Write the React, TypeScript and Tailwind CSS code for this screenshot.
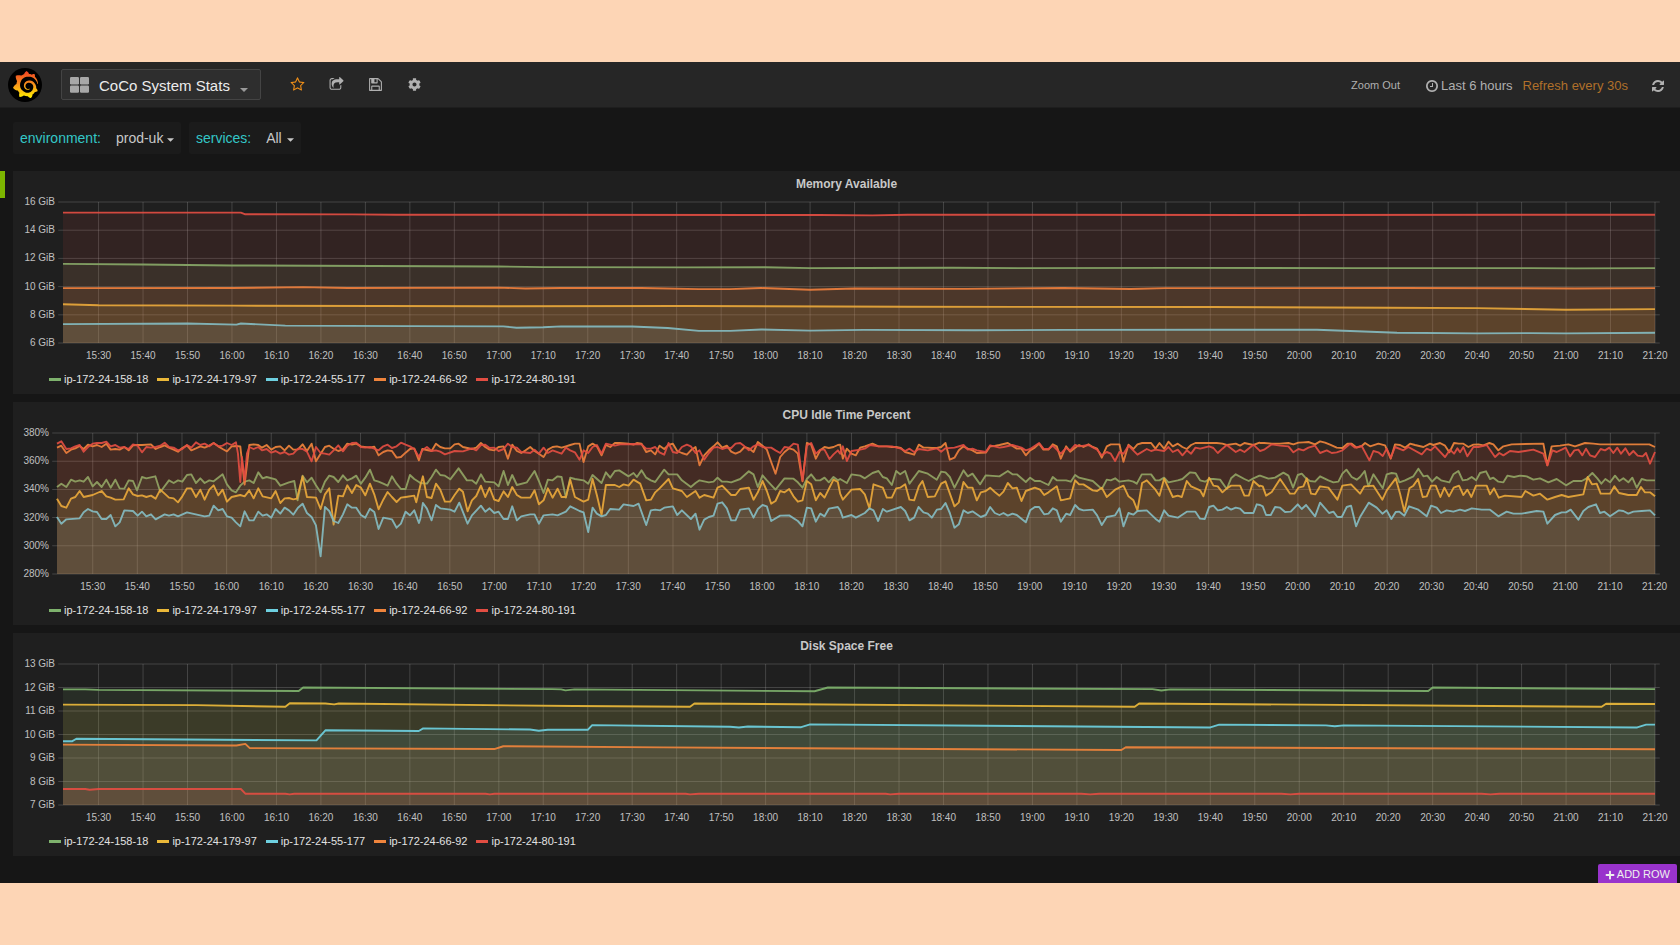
import { Fragment, useId } from "react";
import { FaCog, FaPlus } from "react-icons/fa";
import { SiGrafana } from "react-icons/si";

type Point = [number, number];

type PanelProps = {
  title: string;
  yLabels: string[];
  wideAxis?: boolean;
  /** Points normalised to a 1000 x 1000 plot, one list per host. */
  series: Point[][];
};

const HOSTS = [
  { name: "ip-172-24-158-18", color: "#7eb26d", swatch: "bg-[#7eb26d]" },
  { name: "ip-172-24-179-97", color: "#eab839", swatch: "bg-[#eab839]" },
  { name: "ip-172-24-55-177", color: "#6ed0e0", swatch: "bg-[#6ed0e0]" },
  { name: "ip-172-24-66-92", color: "#ef843c", swatch: "bg-[#ef843c]" },
  { name: "ip-172-24-80-191", color: "#e24d42", swatch: "bg-[#e24d42]" },
];

const MINUTES = 358;
const FIRST_TICK = 8;
const TICKS = Array.from({ length: 36 }, (_, i) => {
  const minutes = 15 * 60 + 30 + i * 10;
  return `${Math.floor(minutes / 60)}:${String(minutes % 60).padStart(2, "0")}`;
});

const parse = (text: string): Point[] =>
  text
    .trim()
    .split(/\s+/)
    .map((pair) => pair.split(",").map(Number) as Point);

/** Series given as "minute,value" pairs. */
const byMinute = (min: number, max: number, text: string): Point[] =>
  parse(text).map(([x, y]) => [(x / MINUTES) * 1000, ((max - y) / (max - min)) * 1000]);

/** CPU samples, in four stretches of 1260 units each. */
const CPU_LEFT = 170;
const CPU_WIDTH = 4795;
const CPU_TOP = 98;
const CPU_HEIGHT = 423;
const cpu = (...parts: string[]): Point[] =>
  parts.flatMap((part, i) =>
    parse(part).map(
      ([x, y]): Point => [
        ((x + i * 1260 - CPU_LEFT) / CPU_WIDTH) * 1000,
        ((y - CPU_TOP) / CPU_HEIGHT) * 1000,
      ],
    ),
  );

const MEMORY = [
  "0,11.61 18,11.57 38,11.5 70,11.46 98,11.43 108,11.38 140,11.36 158,11.37 168,11.31 180,11.32 200,11.34 215,11.31 250,11.33 290,11.31 330,11.31 340,11.29 358,11.31",
  "0,8.75 8,8.68 38,8.65 98,8.61 140,8.62 190,8.57 258,8.55 298,8.5 318,8.47 338,8.36 358,8.4",
  "0,7.34 28,7.38 39,7.3 40,7.38 50,7.23 78,7.2 99,7.18 102,7.08 108,7.12 112,7.18 128,7.17 136,7.06 143,6.86 150,6.86 157,6.96 168,6.88 180,6.93 205,6.9 225,6.93 258,6.94 282,6.94 288,6.87 300,6.73 318,6.68 330,6.7 338,6.68 358,6.73",
  "0,9.89 38,9.9 54,9.96 64,9.9 98,9.93 104,9.87 112,9.9 130,9.9 143,9.82 150,9.82 157,9.9 168,9.78 178,9.87 203,9.84 225,9.9 240,9.83 248,9.89 300,9.9 340,9.87 358,9.89",
  "0,15.25 40,15.25 41,15.13 65,15.12 75,15.1 170,15.08 182,15.05 190,15.1 270,15.08 358,15.1",
].map((s) => byMinute(6, 16, s));

const DISK = [
  "0,11.92 5,11.92 8,11.9 53,11.85 54,12 110,11.93 112,11.92 113,11.88 115,11.92 169,11.84 172,12 245,11.93 247,11.87 249,11.92 307,11.85 308,12 358,11.93",
  "0,11.27 30,11.25 50,11.18 51,11.33 59,11.32 61,11.28 62,11.32 115,11.21 141,11.18 142,11.32 241,11.18 242,11.32 346,11.18 347,11.31 358,11.3",
  "0,9.71 2,9.71 3,9.82 57,9.75 59,10.18 80,10.15 81,10.26 105,10.21 107,10.16 109,10.2 118,10.2 119,10.4 150,10.33 152,10.3 154,10.34 166,10.31 168,10.43 258,10.3 260,10.42 284,10.39 286,10.35 288,10.39 354,10.3 356,10.42 358,10.42",
  "0,9.57 39,9.53 41,9.6 42,9.42 97,9.38 99,9.5 135,9.45 238,9.34 239,9.46 358,9.37",
  "0,7.68 5,7.68 6,7.65 8,7.68 40,7.68 41,7.48 50,7.48 51,7.45 52,7.48 95,7.48 96,7.45 97,7.48 140,7.48 141,7.45 143,7.48 185,7.48 186,7.45 188,7.48 229,7.48 231,7.45 233,7.48 274,7.48 276,7.45 278,7.48 319,7.48 321,7.45 323,7.48 358,7.48",
].map((s) => byMinute(7, 13, s));

const CPU = [
  cpu(
    "170,260 183,250 198,260 212,238 225,244 238,240 250,244 263,230 277,258 290,245 304,260 318,238 331,262 345,238 358,264 372,265 385,240 398,242 410,270 425,230 438,234 465,228 480,275 506,240 520,248 533,240 546,244 560,224 573,222 587,248 600,234 613,248 627,240 640,243 667,222 680,252 694,270 707,276 720,256 733,244 747,240 760,248 774,216 787,234 799,230 826,237 840,256 866,246 882,242 892,300 907,226 920,246 934,232 947,255 961,276 974,244 987,226 1000,230 1014,245 1028,225 1041,240 1055,234 1068,226 1082,250 1095,232 1109,208 1122,240 1135,244 1149,250 1162,256 1175,228 1189,250 1202,266 1216,266 1229,224 1242,236 1256,245",
    "0,248 20,250 34,230 47,208 60,224 74,226 90,237 115,204 140,240 155,240 168,250 182,222 195,244 222,246 235,258 250,212 263,254 276,224 290,254 320,246 343,212 356,242 370,278 383,238 397,240 412,228 424,230 437,292 450,232 464,236 490,240 504,250 517,224 544,248 557,216 570,232 584,212 597,210 625,228 640,218 650,230 664,210 678,232 692,240 705,245 732,208 745,222 771,222 785,240 812,260 826,248 838,240 866,246 880,244 892,232 906,244 920,244 933,246 960,236 986,213 1000,222 1013,260 1027,225 1040,240 1066,268 1093,234 1120,235 1133,246 1147,262 1160,236 1173,222 1187,240 1200,240 1213,232 1226,246 1240,230 1253,240",
    "0,236 20,248 34,222 60,226 74,234 97,218 115,212 128,230 140,234 155,254 168,212 180,222 195,212 208,250 236,212 263,220 290,238 303,214 316,216 329,230 343,262 370,210 383,228 397,220 420,252 437,225 478,228 503,212 517,222 530,222 557,245 570,232 584,242 600,242 625,254 638,230 650,240 678,240 692,244 705,224 717,232 758,242 785,266 800,238 812,240 825,234 838,244 865,240 880,244 890,250 905,222 933,222 946,240 958,240 972,232 985,246 1013,240 1027,236 1050,216 1066,218 1080,240 1095,244 1107,236 1120,236 1140,238 1160,266 1173,234 1187,222 1213,236 1226,242 1240,234 1258,226",
    "0,226 25,235 45,232 70,217 85,226 99,262 113,224 125,220 138,234 150,242 165,244 180,228 205,240 220,246 235,244 247,220 259,208 275,230 290,238 300,230 314,212 325,258 340,222 368,264 380,222 395,218 408,220 418,246 435,240 460,228 475,205 490,228 502,226 516,244 530,230 543,240 568,246 580,222 595,212 608,240 622,238 635,230 648,240 660,218 678,213 690,236 700,232 715,244 730,246 742,226 762,230 780,226 800,228 820,238 840,234 865,246 890,236 918,255 940,242 965,242 980,234 997,218 1012,234 1024,250 1036,236 1050,246 1065,226 1078,242 1090,234 1105,246 1117,232 1130,262 1145,236 1160,240 1185,240",
  ),
  cpu(
    "170,295 183,317 198,322 212,295 225,290 238,272 250,290 277,284 304,272 318,288 331,292 345,298 370,297 385,264 398,282 412,287 425,285 438,290 452,286 466,295 480,268 493,280 506,292 520,294 533,306 546,288 560,264 573,264 587,290 600,268 613,298 627,268 640,255 654,285 667,268 680,304 694,290 720,284 733,288 747,270 760,294 774,264 787,288 813,294 826,272 840,308 853,294 866,293 879,297 890,295 907,228 920,290 947,292 961,326 974,282 987,264 1000,373 1014,286 1028,288 1041,255 1055,278 1068,254 1082,262 1095,285 1109,250 1122,282 1135,327 1149,298 1162,275 1175,290 1189,305 1202,292 1216,290 1242,286 1248,306",
    "0,256 8,228 20,290 34,293 47,250 60,268 74,304 90,304 103,284 117,265 128,274 142,333 155,300 168,287 182,256 195,290 208,262 222,298 235,302 250,273 263,290 276,260 290,284 303,292 330,292 343,270 356,312 370,300 383,264 397,292 412,265 424,290 437,290 450,238 464,290 490,304 504,298 517,236 530,285 544,344 557,254 584,254 597,260 610,252 625,256 640,238 660,250 678,300 692,298 705,276 718,264 745,236 758,264 785,272 800,290 826,272 838,292 852,284 880,292 892,262 906,256 933,284 946,284 960,266 986,262 1000,298 1013,276 1027,242 1040,272 1053,310 1066,302 1080,272 1093,276 1107,266 1120,288 1133,304 1147,300 1160,242 1173,252 1187,300 1200,278 1213,292 1240,238 1253,245",
    "0,280 8,298 34,268 60,266 74,282 88,324 100,252 128,262 140,292 155,292 168,264 180,262 195,252 208,298 222,300 236,258 247,242 263,290 284,288 303,250 316,243 343,318 356,306 370,245 383,262 397,262 410,300 422,276 437,272 450,262 464,275 478,286 490,274 503,248 517,264 530,262 544,302 557,272 584,262 600,268 612,284 625,276 650,258 662,300 690,294 705,240 717,252 730,252 758,270 771,272 785,262 800,290 825,268 850,256 865,288 880,300 892,330 906,248 920,240 946,268 958,286 972,235 998,290 1013,286 1025,290 1040,242 1053,258 1080,270 1090,288 1107,232 1120,256 1133,258 1147,276 1160,264 1173,256 1200,256 1213,286 1226,286 1240,242 1258,258",
    "0,256 8,258 18,286 35,275 60,236 75,258 90,280 103,280 115,262 130,258 140,234 153,280 166,282 180,258 205,262 232,298 247,256 273,252 300,280 313,258 340,256 367,298 380,270 407,234 420,280 433,334 448,264 460,256 474,236 488,290 500,288 513,256 527,256 541,290 553,262 567,288 581,262 597,256 610,284 622,268 634,290 648,256 680,256 690,282 702,264 716,292 735,286 785,290 796,272 820,286 840,280 862,298 885,290 905,284 925,290 970,282 983,230 996,252 1010,250 1022,280 1050,280 1063,258 1077,278 1105,284 1130,284 1143,260 1155,276 1170,276 1185,288",
  ),
  cpu(
    "170,350 183,370 198,357 238,354 250,336 263,326 277,333 290,335 304,356 318,356 331,344 345,378 358,366 372,330 398,332 412,346 425,334 438,348 452,342 466,357 493,342 506,346 520,342 533,348 560,336 613,348 627,346 640,316 654,330 667,326 680,348 694,352 707,366 720,378 733,333 747,360 760,360 774,334 787,346 799,342 813,352 826,326 840,340 853,322 866,330 879,343 893,322 907,310 920,338 934,350 947,375 961,468 974,320 987,332 1000,362 1014,368 1028,342 1041,312 1055,322 1068,322 1082,344 1095,352 1109,325 1122,335 1135,386 1149,352 1175,357 1189,382 1202,370 1216,334 1229,345 1242,330 1256,368",
    "0,356 8,308 20,325 34,360 47,314 60,324 90,328 103,334 117,307 142,370 155,345 182,316 195,334 208,324 222,338 235,334 250,356 263,356 276,318 290,360 303,348 330,342 343,342 356,370 370,345 397,342 412,345 437,334 450,318 478,332 490,336 504,395 517,322 530,340 544,348 557,344 570,326 597,328 610,312 640,317 655,310 678,374 692,330 705,328 720,330 732,322 758,318 771,344 785,330 812,356 826,340 838,388 852,358 866,350 880,346 892,310 906,306 920,324 933,360 946,360 960,328 986,324 1000,352 1013,326 1027,314 1040,318 1053,362 1080,346 1107,345 1133,362 1147,378 1160,322 1173,324 1187,364 1200,340 1213,348 1226,325 1253,320",
    "0,330 8,352 34,344 47,352 74,338 88,324 100,330 114,362 128,326 140,334 182,320 195,332 208,360 222,352 235,320 250,336 263,340 275,352 290,328 303,326 316,308 329,338 343,382 356,372 370,330 383,338 397,333 422,350 437,344 450,320 464,338 478,344 490,338 503,346 517,340 530,344 557,366 570,330 584,320 597,320 612,342 625,340 638,324 650,330 662,364 678,340 690,344 705,314 717,326 730,330 758,328 771,345 785,374 800,350 825,345 838,324 850,378 865,338 880,343 892,332 920,330 946,355 958,364 972,330 985,346 1013,352 1040,334 1066,334 1080,355 1094,356 1107,320 1120,316 1133,330 1147,328 1160,320 1173,328 1187,322 1200,325 1213,338 1240,338 1250,312",
    "0,314 8,318 18,344 32,344 45,320 60,322 75,335 92,334 113,312 125,326 138,314 165,348 180,307 207,338 220,334 232,350 245,350 260,320 273,316 288,378 300,350 326,307 350,322 367,340 380,330 394,356 407,335 418,334 433,346 447,318 475,328 500,348 513,316 530,322 543,338 560,330 580,334 600,328 615,332 635,324 665,328 690,328 715,348 740,334 760,340 785,340 830,332 850,334 862,370 885,344 905,336 918,336 932,328 955,358 970,332 985,320 1008,312 1020,338 1033,334 1050,348 1077,330 1090,332 1105,340 1120,334 1145,332 1170,330 1185,345",
  ),
  cpu(
    "170,142 183,136 198,158 212,148 225,144 238,137 250,146 263,133 277,138 290,134 304,140 318,130 331,148 345,146 358,148 372,140 385,150 398,135 412,134 425,134 452,132 466,146 480,140 493,135 506,142 520,148 533,154 546,143 560,135 573,150 587,144 600,138 613,142 627,136 640,128 654,138 667,146 680,153 694,138 707,137 720,138 733,253 747,134 760,132 774,134 785,142 799,134 813,148 826,140 840,138 853,150 866,136 879,148 893,147 907,132 920,152 934,130 947,183 961,160 974,140 987,136 1000,145 1014,152 1028,147 1041,130 1055,133 1068,130 1082,138 1109,142 1122,139 1135,165 1149,155 1162,150 1175,152 1189,172 1202,170 1216,157 1229,146 1242,144 1256,180",
    "6,146 34,152 47,130 60,140 74,144 90,144 103,132 115,130 128,140 155,146 168,142 182,128 195,140 208,148 222,150 235,140 250,138 263,175 276,133 290,152 303,158 316,150 330,140 343,152 356,160 370,170 383,148 397,140 410,138 424,142 437,138 450,134 464,130 478,130 490,185 504,138 517,130 530,138 544,165 557,134 570,140 584,128 597,128 625,130 640,133 650,128 664,130 678,155 692,150 705,162 718,136 732,146 745,134 758,130 771,152 785,158 800,163 812,150 826,140 838,195 852,165 866,150 880,138 892,126 906,142 920,136 933,154 946,160 960,154 973,140 986,144 1000,155 1013,125 1027,136 1040,148 1053,185 1066,220 1080,170 1093,155 1107,144 1120,148 1133,160 1147,243 1160,128 1173,133 1187,175 1200,150 1213,140 1226,143 1240,140 1253,134",
    "0,133 8,175 20,145 34,160 47,165 60,142 74,138 97,130 115,138 140,138 155,140 168,140 182,143 195,155 222,163 236,133 250,142 263,142 276,143 290,143 303,140 316,128 329,178 343,172 356,150 370,138 383,145 397,150 410,158 437,157 450,138 464,137 478,134 503,128 530,145 544,145 557,165 570,150 584,142 597,130 610,148 625,148 638,132 650,138 662,175 678,138 690,154 705,142 717,134 730,140 745,132 758,140 771,145 785,172 800,138 812,132 838,132 850,184 865,133 880,146 892,132 906,128 933,128 946,145 958,128 972,145 985,124 998,138 1013,130 1027,140 1040,146 1053,134 1066,128 1130,128 1147,130 1160,134 1187,130 1200,136 1213,128 1240,134 1258,127",
    "0,128 12,128 35,130 60,130 85,128 100,132 115,127 130,126 145,125 165,132 180,123 195,127 210,133 230,142 247,143 262,130 275,130 290,142 305,137 315,128 330,138 355,130 375,135 392,175 405,132 420,134 435,142 450,130 465,134 490,140 510,130 520,134 540,128 555,136 568,156 582,128 596,130 610,130 625,140 640,133 655,132 670,135 688,128 700,132 715,150 730,138 755,132 850,130 862,195 875,138 900,136 925,132 945,138 975,128 1000,130 1020,132 1168,132 1185,140",
  ),
  cpu(
    "170,130 183,123 198,146 212,144 225,138 238,134 250,154 263,140 277,130 290,128 304,128 318,124 331,138 345,134 358,142 372,140 385,146 398,132 412,136 425,156 438,140 452,142 466,140 480,136 493,127 506,140 520,142 533,150 546,146 560,134 573,142 587,126 600,134 613,130 627,138 640,128 654,138 667,136 680,128 694,134 707,126 713,160 720,245 725,170 733,240 740,160 747,140 760,146 774,140 785,150 799,146 813,157 826,152 840,160 853,155 866,163 879,160 893,145 907,146 920,154 934,183 947,140 961,158 974,160 987,163 1000,150 1014,135 1028,153 1041,136 1055,128 1068,127 1082,140 1095,142 1109,140 1122,145 1135,150 1149,138 1162,133 1175,143 1189,138 1202,127 1216,133 1229,138 1242,146 1256,170",
    "6,150 20,140 34,152 47,150 60,154 74,162 103,152 128,153 155,144 168,150 182,134 195,133 208,143 222,142 235,152 250,146 263,130 276,140 290,142 303,155 330,158 343,148 356,160 370,142 383,158 397,150 424,160 437,142 450,150 464,156 478,178 490,150 504,158 517,140 530,134 544,160 557,130 570,133 584,136 600,132 640,131 664,132 678,145 692,145 705,140 718,156 732,163 745,128 758,155 771,158 785,140 800,133 812,138 826,158 838,150 852,178 866,158 880,142 892,140 906,146 920,142 933,143 946,130 960,128 973,138 986,150 1000,138 1013,132 1027,140 1040,142 1053,142 1066,150 1080,158 1093,140 1107,142 1120,130 1133,133 1147,240 1160,135 1173,128 1187,160 1200,148 1213,148 1228,176 1240,162 1253,150",
    "0,160 8,138 20,182 34,152 60,148 74,145 90,134 115,138 155,138 182,145 195,152 208,145 222,155 236,146 263,150 290,144 303,154 316,144 343,142 370,134 383,148 397,145 410,150 437,155 450,135 478,142 490,140 517,134 544,142 557,150 570,146 597,128 610,145 625,146 638,136 662,160 678,143 690,150 705,134 717,138 745,134 771,148 785,165 800,155 812,160 825,182 838,155 850,160 865,136 892,163 920,146 933,152 946,148 972,152 985,140 998,155 1013,148 1027,165 1040,150 1053,160 1066,142 1080,145 1107,138 1120,143 1133,158 1147,145 1160,134 1187,155 1200,148 1213,155 1240,133 1258,150",
    "0,152 12,148 35,132 60,136 85,138 100,156 115,146 130,150 145,142 165,136 180,158 200,150 215,158 230,156 247,150 270,130 285,142 305,137 328,180 340,152 355,156 368,167 380,145 392,172 405,140 430,150 445,140 485,162 500,145 512,150 525,138 555,170 570,148 582,160 592,144 600,156 610,140 622,168 640,140 655,140 680,134 705,170 718,158 730,165 750,152 775,155 795,152 820,148 850,160 862,195 877,150 890,155 905,148 917,142 930,168 943,150 955,148 967,165 978,145 990,165 1005,170 1022,146 1035,150 1048,142 1060,158 1072,142 1083,160 1096,144 1108,164 1120,152 1133,166 1148,168 1158,158 1170,190 1185,155",
  ),
];

const ICONS = {
  star: "M1201 1004l306-297-422-62-189-382-189 382-422 62 306 297-73 421 378-199 377 199zm527-357q0 22-26 48l-363 354 86 500q1 7 1 20 0 50-41 50-19 0-40-12l-449-236-449 236q-22 12-40 12-21 0-31.5-14.5t-10.5-35.5q0-6 2-20l86-500-364-354q-25-27-25-48 0-37 56-46l502-73 225-455q19-41 49-41t49 41l225 455 502 73q56 9 56 46z",
  share:
    "M1472 989v259q0 119-84.5 203.5t-203.5 84.5h-832q-119 0-203.5-84.5t-84.5-203.5v-832q0-119 84.5-203.5t203.5-84.5h255q13 0 22.5 9.5t9.5 22.5q0 27-26 32-77 26-133 60-10 4-16 4h-112q-66 0-113 47t-47 113v832q0 66 47 113t113 47h832q66 0 113-47t47-113v-214q0-19 18-29 28-13 54-37 16-16 35-8 21 9 21 29zm237-496l-384 384q-18 19-45 19-12 0-25-5-39-17-39-59v-192h-160q-323 0-438 131-119 137-74 473 3 23-20 34-8 2-12 2-16 0-26-13-10-14-21-31t-39.5-68.5-49.5-99.5-38.5-114-17.5-122q0-49 3.5-91t14-90 28-88 47-81.5 68.5-74 94.5-61.5 124.5-48.5 159.5-30.5 196.5-11h160v-192q0-42 39-59 13-5 25-5 26 0 45 19l384 384q19 19 19 45t-19 45z",
  save: "M512 1536h768v-384h-768v384zm896 0h128v-896q0-14-10-38.5t-20-34.5l-281-281q-10-10-34-20t-39-10v416q0 40-28 68t-68 28h-576q-40 0-68-28t-28-68v-416h-128v1280h128v-416q0-40 28-68t68-28h832q40 0 68 28t28 68v416zm-384-928v-320q0-13-9.5-22.5t-22.5-9.5h-192q-13 0-22.5 9.5t-9.5 22.5v320q0 13 9.5 22.5t22.5 9.5h192q13 0 22.5-9.5t9.5-22.5zm640 32v928q0 40-28 68t-68 28h-1344q-40 0-68-28t-28-68v-1344q0-40 28-68t68-28h928q40 0 88 20t76 48l280 280q28 28 48 76t20 88z",
  clock:
    "M1024 544v448q0 14-9 23t-23 9h-320q-14 0-23-9t-9-23v-64q0-14 9-23t23-9h224v-352q0-14 9-23t23-9h64q14 0 23 9t9 23zm416 352q0-148-73-273t-198-198-273-73-273 73-198 198-73 273 73 273 198 198 273 73 273-73 198-198 73-273zm224 0q0 209-103 385.5t-279.5 279.5-385.5 103-385.5-103-279.5-279.5-103-385.5 103-385.5 279.5-279.5 385.5-103 385.5 103 279.5 279.5 103 385.5z",
  refresh:
    "M1639 1056q0 5-1 7-64 268-268 434.5t-478 166.5q-146 0-282.5-55t-243.5-157l-129 129q-19 19-45 19t-45-19-19-45v-448q0-26 19-45t45-19h448q26 0 45 19t19 45-19 45l-137 137q71 66 161 102t187 36q134 0 250-65t186-179q11-17 53-117 8-23 30-23h192q13 0 22.5 9.5t9.5 22.5zm25-800v448q0 26-19 45t-45 19h-448q-26 0-45-19t-19-45 19-45l138-138q-148-137-349-137-134 0-250 65t-186 179q-11 17-53 117-8 23-30 23h-199q-13 0-22.5-9.5t-9.5-22.5v-7q65-268 270-434.5t480-166.5q146 0 284 55.5t245 156.5l130-129q19-19 45-19t45 19 19 45z",
};

function Icon({ name, className }: { name: keyof typeof ICONS; className: string }) {
  return (
    <svg viewBox="0 0 1792 1792" className={className} fill="currentColor" aria-hidden="true">
      <path d={ICONS[name]} />
    </svg>
  );
}

function Caret({ className = "" }: { className?: string }) {
  return (
    <svg viewBox="0 0 8 4" className={`h-1 w-2 ${className}`} fill="currentColor" aria-hidden="true">
      <path d="M0 0h8L4 4z" />
    </svg>
  );
}

function Logo() {
  const id = useId();
  return (
    <a href="#home" aria-label="Home" className="flex size-[34px] items-center justify-center rounded-full bg-black">
      <svg width="0" height="0" className="absolute" aria-hidden="true">
        <linearGradient id={id} x1="0" y1="0" x2="0" y2="1">
          <stop offset="0" stopColor="#ef4023" />
          <stop offset="0.45" stopColor="#f78b1e" />
          <stop offset="1" stopColor="#fff100" />
        </linearGradient>
      </svg>
      <SiGrafana className="size-[27px]" fill={`url(#${id})`} stroke="none" />
    </a>
  );
}

function Plot({ series, rows }: { series: Point[][]; rows: number }) {
  return (
    <svg
      viewBox="0 0 1000 1000"
      preserveAspectRatio="none"
      className="h-[141px] w-full min-w-0 flex-1 overflow-visible"
      aria-hidden="true"
    >
      <g stroke="#c8c8c8" strokeOpacity="0.22" strokeWidth="1">
        {Array.from({ length: rows }, (_, i) => {
          const y = (i / (rows - 1)) * 1000;
          return <line key={i} x1="-3" x2="1003" y1={y} y2={y} vectorEffect="non-scaling-stroke" />;
        })}
        {TICKS.map((tick, i) => {
          const x = ((FIRST_TICK + i * 10) / MINUTES) * 1000;
          return <line key={tick} x1={x} x2={x} y1="0" y2="1000" vectorEffect="non-scaling-stroke" />;
        })}
      </g>
      {series.map((points, i) => {
        const line = points.map((p) => p.join(",")).join(" ");
        return (
          <Fragment key={i}>
            <polygon points={`${line} 1000,1000 0,1000`} fill={HOSTS[i].color} fillOpacity="0.1" />
            <polyline
              points={line}
              fill="none"
              stroke={HOSTS[i].color}
              strokeOpacity="0.92"
              strokeWidth="1.9"
              strokeLinejoin="round"
              vectorEffect="non-scaling-stroke"
            />
          </Fragment>
        );
      })}
    </svg>
  );
}

function Panel({ title, yLabels, wideAxis = false, series }: PanelProps) {
  return (
    <section className="min-w-0 flex-1 bg-[#1f1f1f] pb-[7px]">
      <h2 className="h-[31px] pt-[5px] text-center text-xs leading-4 font-bold text-[#c8c8c8]">{title}</h2>
      <div className="flex pr-[25px]">
        <div
          className={`mr-2 flex h-[141px] shrink-0 flex-col justify-between text-right text-[10px] text-[#c0c0c0] ${
            wideAxis ? "w-[42px]" : "w-9"
          }`}
        >
          {yLabels.map((label) => (
            <span key={label} className="h-0 leading-[0px]">
              {label}
            </span>
          ))}
        </div>
        <Plot series={series} rows={yLabels.length} />
      </div>
      <div
        className={`mt-[6px] mr-[3px] flex h-[14px] text-center text-[10px] leading-[14px] text-[#c0c0c0] ${
          wideAxis ? "ml-[50px]" : "ml-11"
        }`}
      >
        <span className="flex-[3]" />
        {TICKS.map((tick) => (
          <span key={tick} className="min-w-0 flex-[10] whitespace-nowrap">
            {tick}
          </span>
        ))}
      </div>
      <ul className="mt-2 ml-9 flex gap-[9px] text-[11px] leading-4 text-[#e2e2e2]">
        {HOSTS.map((host) => (
          <li key={host.name}>
            <button type="button" className="flex items-center gap-[3px] whitespace-nowrap">
              <span className={`h-[3px] w-3 ${host.swatch}`} />
              {host.name}
            </button>
          </li>
        ))}
      </ul>
    </section>
  );
}

function Filter({ label, value, selectClass }: { label: string; value: string; selectClass: string }) {
  return (
    <label className="flex h-8 items-center rounded-[2px] bg-[#1b1b1b] px-[7px] text-sm text-[#c8c8c8]">
      <span className="mr-[15px] text-[#33c7c7]">{label}</span>
      <select defaultValue={value} className={`appearance-none bg-transparent outline-none ${selectClass}`}>
        <option value={value}>{value}</option>
      </select>
      <Caret className="mt-1 ml-[3px] w-[7px]" />
    </label>
  );
}

export default function App() {
  return (
    <div className="min-h-screen bg-[#fdd5b5] py-[62px] font-['Liberation_Sans',Arial,sans-serif]">
      <div className="bg-[#161616]">
        <header className="flex h-[46px] items-center border-b border-[#1e1e1e] bg-[#262626] pr-[15px] pl-2 text-[#b0b0b0]">
          <Logo />
          <button
            type="button"
            className="ml-[19px] flex h-[31px] w-[200px] items-center rounded-[2px] border border-[#444] bg-[#2e2e2e] pt-px pl-2 text-[15px] text-[#ececec]"
          >
            <svg viewBox="0 0 19 16" className="mr-[10px] h-4 w-[19px] text-[#a8a8a8]" fill="currentColor" aria-hidden="true">
              <rect width="9" height="7.4" rx="1.2" />
              <rect x="10" width="9" height="7.4" rx="1.2" />
              <rect y="8.4" width="9" height="7.4" rx="1.2" />
              <rect x="10" y="8.4" width="9" height="7.4" rx="1.2" />
            </svg>
            <span className="pt-[2px]">CoCo System Stats</span>
            <Caret className="mt-[10px] ml-[10px] text-[#999]" />
          </button>
          <nav aria-label="Dashboard actions" className="ml-[29px] flex items-center gap-6">
            <button type="button" aria-label="Star" className="text-[#f29018]">
              <Icon name="star" className="size-[15px]" />
            </button>
            <button type="button" aria-label="Share">
              <Icon name="share" className="size-[15px]" />
            </button>
            <button type="button" aria-label="Save">
              <Icon name="save" className="size-[15px]" />
            </button>
            <button type="button" aria-label="Settings" className="px-px">
              <FaCog className="size-[13px]" />
            </button>
          </nav>
          <div className="ml-auto flex items-center pt-[2px] text-[13px] whitespace-nowrap">
            <button type="button" className="mr-[25px] text-[11px]">
              Zoom Out
            </button>
            <button type="button" className="mr-[10px] flex items-center gap-[2px]">
              <Icon name="clock" className="size-[14px]" />
              Last 6 hours
            </button>
            <button type="button" className="mr-[23px] text-[#b0702a]">
              Refresh every 30s
            </button>
            <button type="button" aria-label="Refresh">
              <Icon name="refresh" className="size-[14px]" />
            </button>
          </div>
        </header>

        <div className="flex gap-2 pt-[14px] pb-[17px] pl-[13px]">
          <Filter label="environment:" value="prod-uk" selectClass="w-12" />
          <Filter label="services:" value="All" selectClass="w-[18px]" />
        </div>

        <main className="flex flex-col gap-2">
          <div className="flex items-start gap-2">
            <button type="button" aria-label="Row menu" className="h-[27px] w-[5px] bg-[#7cb500]" />
            <Panel
              title="Memory Available"
              wideAxis
              yLabels={["16 GiB", "14 GiB", "12 GiB", "10 GiB", "8 GiB", "6 GiB"]}
              series={MEMORY}
            />
          </div>
          <div className="flex pl-[13px]">
            <Panel
              title="CPU Idle Time Percent"
              yLabels={["380%", "360%", "340%", "320%", "300%", "280%"]}
              series={CPU}
            />
          </div>
          <div className="flex pl-[13px]">
            <Panel
              title="Disk Space Free"
              wideAxis
              yLabels={["13 GiB", "12 GiB", "11 GiB", "10 GiB", "9 GiB", "8 GiB", "7 GiB"]}
              series={DISK}
            />
          </div>
        </main>

        <div className="flex justify-end pt-2 pr-[3px]">
          <button
            type="button"
            className="flex h-[19px] items-center gap-[2px] rounded-t-[2px] bg-[#9933cc] px-[7px] pt-[2px] text-[11px] text-[#eee]"
          >
            <FaPlus className="size-[10px]" />
            ADD ROW
          </button>
        </div>
      </div>
    </div>
  );
}
